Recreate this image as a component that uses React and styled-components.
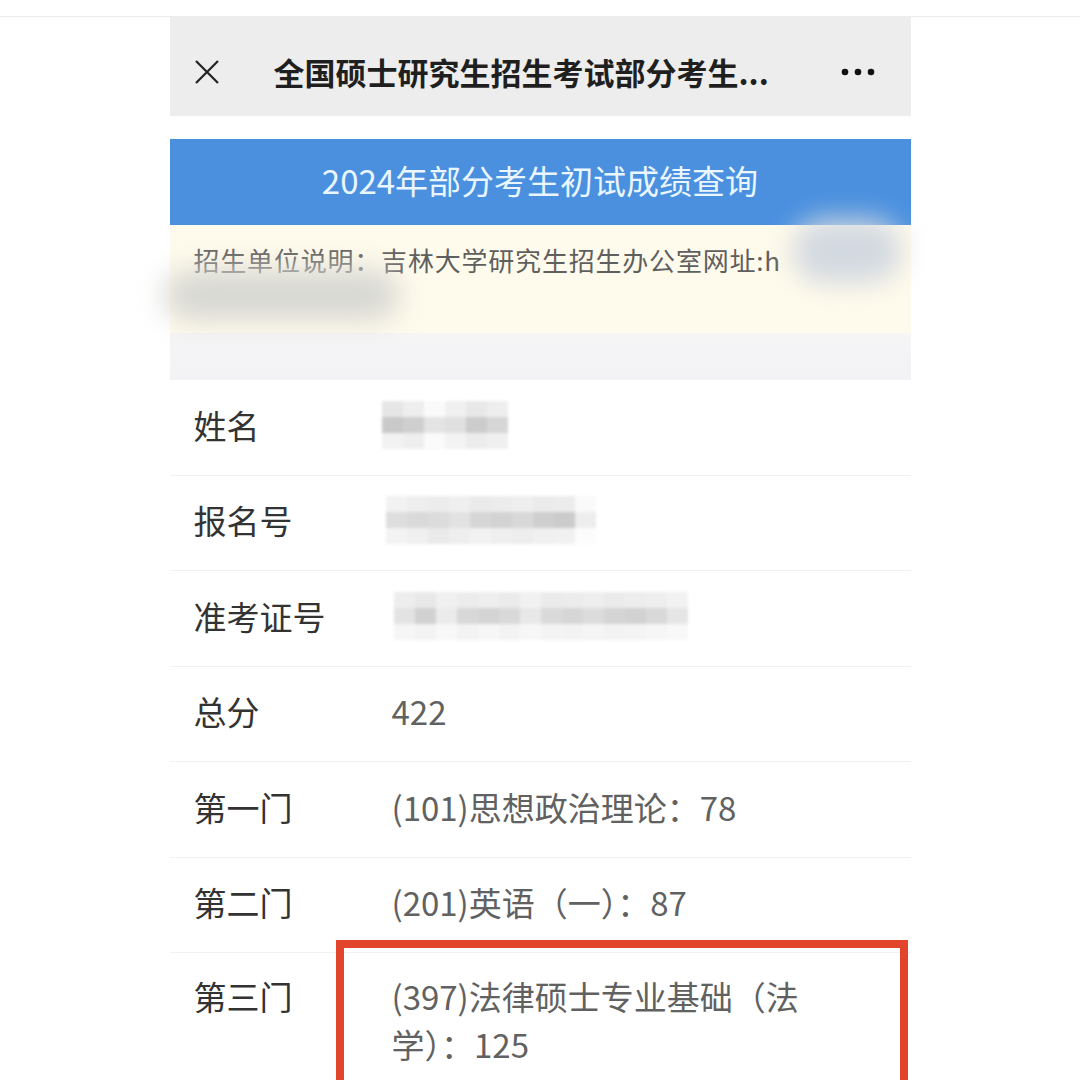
import React from "react";
import styled, { createGlobalStyle } from "styled-components";

const GlobalStyle = createGlobalStyle`
  html, body {
    margin: 0;
    padding: 0;
    background: #fff;
  }
  body {
    font-family: "Noto Sans CJK SC", "Noto Sans", sans-serif;
  }
`;

const rows = [
  { label: "姓名", mosaic: "name" },
  { label: "报名号", mosaic: "reg" },
  { label: "准考证号", mosaic: "ticket" },
  { label: "总分", value: "422" },
  { label: "第一门", value: "(101)思想政治理论：78" },
  { label: "第二门", value: "(201)英语（一）：87" },
  { label: "第三门", value: "(397)法律硕士专业基础（法学）：125", marked: true },
];

const mosaics = {
  name: {
    offset: -10,
    cols: [
      ["#e6e6e6", "#c9c9c9", "#f2f2f2"],
      ["#eeeeee", "#cfcfcf", "#eeeeee"],
      ["#fafafa", "#e4e4e4", "#fafafa"],
      ["#f0f0f0", "#e0e0e0", "#f3f3f3"],
      ["#e8e8e8", "#cccccc", "#ececec"],
      ["#eeeeee", "#d6d6d6", "#f0f0f0"],
    ],
  },
  reg: {
    offset: -6,
    cols: [
      ["#f2f2f2", "#dedede", "#f3f3f3"],
      ["#eeeeee", "#d9d9d9", "#f0f0f0"],
      ["#ececec", "#dcdcdc", "#eaeaea"],
      ["#efefef", "#e2e2e2", "#eeeeee"],
      ["#eaeaea", "#d6d6d6", "#f2f2f2"],
      ["#ececec", "#d3d3d3", "#efefef"],
      ["#eeeeee", "#d8d8d8", "#ededed"],
      ["#ebebeb", "#cfcfcf", "#f0f0f0"],
      ["#ececec", "#cbcbcb", "#f1f1f1"],
      ["#fafafa", "#ededed", "#fcfcfc"],
    ],
  },
  ticket: {
    offset: 2,
    cols: [
      ["#ededed", "#e3e3e3", "#f6f6f6"],
      ["#e8e8e8", "#d1d1d1", "#f3f3f3"],
      ["#f0f0f0", "#ebebeb", "#f8f8f8"],
      ["#ececec", "#d8d8d8", "#f3f3f3"],
      ["#eeeeee", "#d4d4d4", "#f6f6f6"],
      ["#ebebeb", "#d9d9d9", "#f3f3f3"],
      ["#f1f1f1", "#e8e8e8", "#f7f7f7"],
      ["#ebebeb", "#dadada", "#f4f4f4"],
      ["#ececec", "#d6d6d6", "#f3f3f3"],
      ["#eeeeee", "#dcdcdc", "#f5f5f5"],
      ["#ebebeb", "#d5d5d5", "#f3f3f3"],
      ["#ededed", "#d2d2d2", "#f4f4f4"],
      ["#eeeeee", "#d9d9d9", "#f6f6f6"],
      ["#f2f2f2", "#e5e5e5", "#f8f8f8"],
    ],
  },
};

function App() {
  return (
    <>
      <GlobalStyle />
      <TopStrip />
      <Panel>
        <Header>
          <CloseIcon viewBox="0 0 26 26">
            <path d="M2 2 L24 24 M24 2 L2 24" stroke="#222" strokeWidth="2.2" fill="none" />
          </CloseIcon>
          <HeaderTitle>全国硕士研究生招生考试部分考生...</HeaderTitle>
          <MoreIcon viewBox="0 0 34 8">
            <circle cx="4" cy="4" r="3.3" fill="#111" />
            <circle cx="17" cy="4" r="3.3" fill="#111" />
            <circle cx="30" cy="4" r="3.3" fill="#111" />
          </MoreIcon>
        </Header>
        <Banner>2024年部分考生初试成绩查询</Banner>
        <Notice>
          <NoticeText>
            招生单位说明：吉林大学研究生招生办公室网址:h
          </NoticeText>
          <Blob $left={622} $top={-6} $w={110} $h={64} $color="#d2d8e0" />
          <Blob $left={-6} $top={44} $w={236} $h={52} $color="#d8d8d3" />
        </Notice>
        <GreyBand />
        <Table>
          {rows.map((row) => (
            <Row key={row.label} $marked={row.marked}>
              <Label>{row.label}</Label>
              {row.mosaic ? (
                <Mosaic $offset={mosaics[row.mosaic].offset}>
                  {mosaics[row.mosaic].cols.map((col, i) => (
                    <MosaicCol key={i}>
                      {col.map((c, j) => (
                        <Pixel key={j} style={{ background: c }} />
                      ))}
                    </MosaicCol>
                  ))}
                </Mosaic>
              ) : (
                <Value>{row.value}</Value>
              )}
              {row.marked && <RedBox />}
            </Row>
          ))}
        </Table>
      </Panel>
    </>
  );
}

const TopStrip = styled.div`
  height: 16px;
  border-bottom: 1px solid #ececec;
`;

const Panel = styled.div`
  width: 741px;
  margin: 0 auto;
  background: #fff;
`;

const Header = styled.div`
  height: 99px;
  box-sizing: border-box;
  background: #ededed;
  display: flex;
  align-items: center;
  padding: 10px 36px 0 24px;
`;

const CloseIcon = styled.svg`
  width: 26px;
  height: 26px;
  flex: none;
`;

const HeaderTitle = styled.div`
  flex: 1;
  margin-left: 54px;
  font-size: 31px;
  font-weight: 700;
  color: #1f1f1f;
  white-space: nowrap;
`;

const MoreIcon = styled.svg`
  width: 34px;
  height: 8px;
  flex: none;
`;

const Banner = styled.div`
  margin-top: 23px;
  height: 86px;
  background: #4a90df;
  color: #eaf6ff;
  font-size: 33px;
  display: flex;
  align-items: center;
  justify-content: center;
  padding-bottom: 4px;
  box-sizing: border-box;
`;

const Notice = styled.div`
  position: relative;
  height: 108px;
  background: #fffbec;
  padding: 16px 0 0 24px;
  box-sizing: border-box;
`;

const NoticeText = styled.div`
  font-size: 26px;
  letter-spacing: 0.8px;
  color: #5f5f5f;
  white-space: nowrap;
  overflow: hidden;
  width: 598px;
`;

const Blob = styled.div`
  position: absolute;
  left: ${(p) => p.$left}px;
  top: ${(p) => p.$top}px;
  width: ${(p) => p.$w}px;
  height: ${(p) => p.$h}px;
  background: ${(p) => p.$color};
  border-radius: 40px;
  filter: blur(14px);
`;

const GreyBand = styled.div`
  height: 47px;
  background: linear-gradient(#f6f6f7, #f2f2f5);
`;

const Table = styled.div`
  display: flex;
  flex-direction: column;
`;

const Row = styled.div`
  position: relative;
  min-height: 95.5px;
  box-sizing: border-box;
  display: flex;
  align-items: center;
  padding-bottom: 5px;
  border-bottom: ${(p) => (p.$marked ? "none" : "1px solid #f1f1f1")};
  ${(p) =>
    p.$marked &&
    `
    align-items: flex-start;
    padding-top: 19px;
    min-height: 180px;
  `}
`;

const Label = styled.div`
  width: 222px;
  padding-left: 24px;
  box-sizing: border-box;
  flex: none;
  font-size: 33px;
  line-height: 48px;
  color: #333;
`;

const Value = styled.div`
  width: 450px;
  font-size: 33px;
  line-height: 48px;
  color: #616161;
`;

const Mosaic = styled.div`
  display: flex;
  margin-left: ${(p) => p.$offset}px;
  filter: blur(1.5px);
`;

const MosaicCol = styled.div`
  display: flex;
  flex-direction: column;
`;

const Pixel = styled.div`
  width: 21px;
  height: 16px;
`;

const RedBox = styled.div`
  position: absolute;
  left: 166px;
  right: 3px;
  top: -13px;
  bottom: -60px;
  border: 8px solid #e2452b;
  box-sizing: border-box;
  pointer-events: none;
`;

export default App;
